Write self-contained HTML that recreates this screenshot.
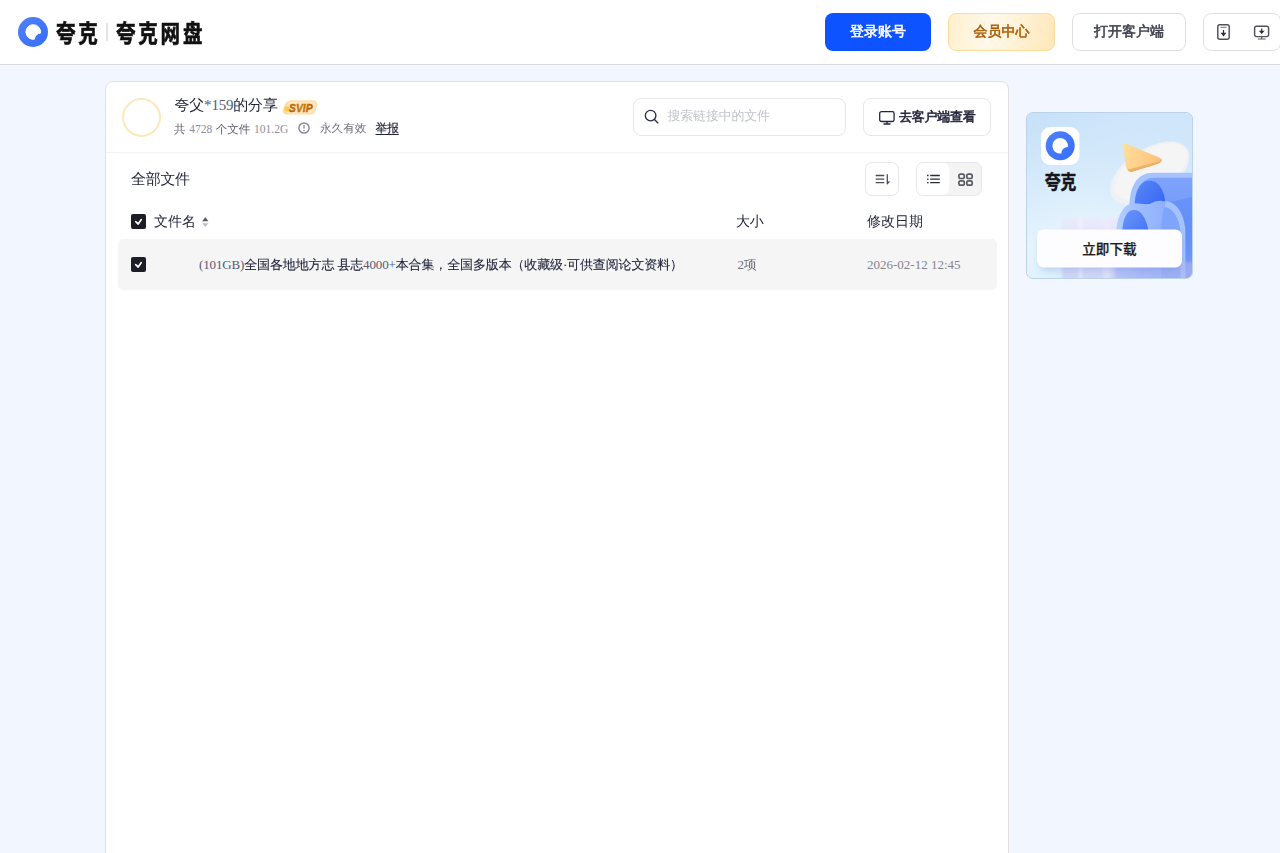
<!DOCTYPE html>
<html lang="zh-CN">
<head>
<meta charset="utf-8">
<title>夸克网盘分享</title>
<style>
*{box-sizing:border-box;margin:0;padding:0}
html,body{width:1280px;height:853px;overflow:hidden}
body{background:#f2f6fe;font-family:"Liberation Serif","WenQuanYi Zen Hei",serif;color:#23263b;position:relative}
.abs{position:absolute;white-space:nowrap}
.hdr{position:absolute;left:0;top:0;width:1280px;height:65px;background:#fff;border-bottom:1px solid #dcdcde}
.logo-t{position:absolute;font-family:"Liberation Sans","Noto Sans CJK SC",sans-serif;font-weight:700;-webkit-text-stroke:0.550px #111;color:#111;white-space:nowrap;transform-origin:0 50%;will-change:transform}
.b{-webkit-text-stroke:0.56px currentColor}
.c{-webkit-text-stroke:0.100px currentColor}
.l{-webkit-text-stroke:0;color:#555a73}
.btn{position:absolute;top:13px;height:38px;border-radius:8px;font-size:14px;text-align:center;line-height:37px;white-space:nowrap}
.card{position:absolute;left:105px;top:81px;width:904px;height:800px;background:#fff;border:1px solid #e1e1e3;border-radius:8px}
.cb{position:absolute;width:15px;height:15px;border-radius:2px;background:#1d1e25}
</style>
</head>
<body>
<div class="hdr">
  <svg class="abs" style="left:17px;top:16px" width="32" height="32" viewBox="0 0 32 32"><defs><linearGradient id="lg" x1="0" y1="0" x2="1" y2="1"><stop offset="0" stop-color="#4f82f7"/><stop offset="1" stop-color="#356cff"/></linearGradient></defs><circle cx="16" cy="16" r="15" fill="url(#lg)"/><path d="M16.300 8.700a7.300 7.300 0 1 0 1.100 14.500a6.300 6.300 0 0 1 6.100-6.100A7.300 7.300 0 0 0 16.300 8.700z" fill="#fff" stroke="#fff" stroke-width="1" stroke-linejoin="round"/></svg>
  <div class="logo-t" style="left:56px;top:16.600px;font-size:19.500px;letter-spacing:2.800px;line-height:32px;transform:scaleY(1.25)">夸克</div>
  <div class="abs" style="left:106px;top:23px;width:1.5px;height:18px;background:#e2e3e8"></div>
  <div class="logo-t" style="left:115.500px;top:16.600px;font-size:19.500px;letter-spacing:2.800px;line-height:32px;transform:scaleY(1.25)">夸克网盘</div>
  <div class="btn b" style="left:825px;width:106px;background:#0d53ff;color:#fff">登录账号</div>
  <div class="btn b" style="left:948px;width:107px;background:linear-gradient(105deg,#ffefcd 0%,#fff9ea 40%,#ffe7b8 100%);border:1px solid #ffdc9a;color:#ad5c04;line-height:35px">会员中心</div>
  <div class="btn b" style="left:1072px;width:114px;background:#fff;border:1px solid #dddfe3;color:#3d414d;line-height:35px">打开客户端</div>
  <div class="btn" style="left:1203px;width:78px;background:#fff;border:1px solid #dddfe3"></div>
  <svg class="abs" style="left:1215px;top:22px" width="18" height="20" viewBox="0 0 18 20" fill="none"><rect x="2.800" y="2.800" width="11.400" height="14.400" rx="2" stroke="#4f525a" stroke-width="1.450"/><path d="M5.500 5.300h6" stroke="#5a5d66" stroke-width="0.900"/><path d="M8.500 8v3" stroke="#2a2c33" stroke-width="1.200"/><path d="M5.600 10.800h5.800l-2.900 3.600z" fill="#2a2c33"/></svg>
  <svg class="abs" style="left:1252px;top:22px" width="20" height="20" viewBox="0 0 20 20" fill="none"><rect x="2.600" y="4.200" width="14" height="10.400" rx="2" stroke="#4f525a" stroke-width="1.450"/><path d="M9.600 14.600v2.200M5.800 17h7.800" stroke="#5a5d66" stroke-width="1.200"/><path d="M9.700 6.500v2.500" stroke="#2a2c33" stroke-width="1.200"/><path d="M6.800 8.700h5.800l-2.900 3.300z" fill="#2a2c33"/></svg>
</div>

<div class="card">
  <div class="abs" style="left:15.500px;top:16px;width:39px;height:39px;border-radius:50%;border:2.400px solid #ffe8b8"></div>
  <div class="abs" style="left:68.500px;top:13.400px;font-size:15px;letter-spacing:-0.200px;line-height:20px">夸父<span class="l">*159</span>的分享</div>
  <!-- SVIP badge -->
  <svg class="abs" style="left:174px;top:15px" width="40" height="20" viewBox="0 0 40 20"><defs><linearGradient id="sv" x1="0" y1="0" x2="1" y2="0"><stop offset="0" stop-color="#ffd891"/><stop offset="0.250" stop-color="#ffe9c2"/><stop offset="1" stop-color="#ffe6b6"/></linearGradient><linearGradient id="svt" x1="0" y1="0" x2="1" y2="0"><stop offset="0" stop-color="#b05600"/><stop offset="0.500" stop-color="#d08414"/><stop offset="1" stop-color="#b45c02"/></linearGradient><filter id="svb" x="-20%" y="-20%" width="140%" height="140%"><feGaussianBlur stdDeviation="0.450"/></filter></defs><path filter="url(#svb)" d="M10 3.800h23.500a3.300 3.300 0 0 1 3.200 4.100l-1.700 6.400a3.800 3.800 0 0 1-3.600 2.700H6.300a3 3 0 0 1-2.900-3.900l1.100-3.500A8 8 0 0 1 10 3.800z" fill="url(#sv)" stroke="#ffd594" stroke-width="0.800"/><circle cx="7" cy="12" r="2.600" fill="#ffc94f" filter="url(#svb)"/><text x="20.800" y="15" text-anchor="middle" font-family="Liberation Sans,sans-serif" font-weight="bold" font-style="italic" font-size="10.300" fill="url(#svt)" stroke="#b86308" stroke-width="0.350">SVIP</text></svg>
  <div class="abs" style="left:68px;top:38.500px;font-size:11.500px;word-spacing:0.800px;line-height:16px;color:#5d606d">共 <span style="color:#8b8fa0">4728</span> 个文件 <span style="color:#8b8fa0">101.2G</span></div>
  <svg class="abs" style="left:191px;top:39px" width="14" height="14" viewBox="0 0 14 14" fill="none"><circle cx="7" cy="7" r="5.100" stroke="#8a8c9c" stroke-width="1.500"/><path d="M7 4v3.600" stroke="#8a8c9c" stroke-width="1.400"/><circle cx="7" cy="9.500" r="0.800" fill="#8a8c9c"/></svg>
  <div class="abs" style="left:214px;top:39px;font-size:11.600px;line-height:16px;color:#6b6e7a">永久有效</div>
  <div class="abs" style="left:269.500px;top:39px;font-size:11.700px;line-height:16px;color:#23263b;text-decoration:underline;text-underline-offset:2px;-webkit-text-stroke:0.200px">举报</div>

  <!-- search -->
  <div class="abs" style="left:527px;top:16px;width:213px;height:38px;border:1px solid #e6e7ea;border-radius:8px"></div>
  <svg class="abs" style="left:537px;top:26.200px" width="18" height="18" viewBox="0 0 18 18" fill="none"><circle cx="7.600" cy="7.600" r="5.300" stroke="#2a2e45" stroke-width="1.350"/><path d="M11.500 11.500l3.400 3.400" stroke="#2a2e45" stroke-width="1.350" stroke-linecap="round"/></svg>
  <div class="abs" style="left:561.500px;top:25px;font-size:13px;letter-spacing:-0.200px;line-height:18px;color:#c3c5cb">搜索链接中的文件</div>
  <!-- client button -->
  <div class="abs" style="left:757px;top:16px;width:128px;height:38px;border:1px solid #e6e7ea;border-radius:8px"></div>
  <svg class="abs" style="left:772px;top:28px" width="18" height="16" viewBox="0 0 18 16" fill="none"><rect x="1.700" y="1.700" width="14.400" height="9.800" rx="1.800" stroke="#23263b" stroke-width="1.300"/><path d="M9 11.500v2.300M5.500 14h7" stroke="#23263b" stroke-width="1.300"/></svg>
  <div class="abs b" style="left:793px;top:26px;font-size:13px;letter-spacing:-0.250px;line-height:18px;color:#23263b">去客户端查看</div>

  <div class="abs" style="left:0;top:70px;width:902px;height:1px;background:#f3f3f5"></div>
  <div class="abs" style="left:25px;top:87px;font-size:15px;letter-spacing:-0.300px;line-height:20px">全部文件</div>

  <!-- sort button -->
  <div class="abs" style="left:759px;top:80px;width:34px;height:34px;border:1px solid #e6e7ea;border-radius:7px"></div>
  <svg class="abs" style="left:767px;top:89px" width="20" height="18" viewBox="0 0 20 18" fill="none"><path d="M2.700 4.500h8.600M2.700 8.100h8.600M2.700 11.700h8.600" stroke="#4a4d57" stroke-width="1.300"/><path d="M14.300 3.200v10" stroke="#4a4d57" stroke-width="1.300"/><path d="M14.300 10.400h3l-3 3z" fill="#4a4d57"/></svg>
  <!-- toggle -->
  <div class="abs" style="left:810px;top:80px;width:66px;height:34px;border:1px solid #e6e7ea;border-radius:7px;background:#f4f4f5"></div>
  <div class="abs" style="left:811px;top:81px;width:32px;height:32px;border-radius:6px;background:#fff"></div>
  <svg class="abs" style="left:818px;top:89px" width="20" height="18" viewBox="0 0 20 18" fill="none"><path d="M3 4.500h1.600M3 8.100h1.600M3 11.700h1.600M6.200 4.500h9.600M6.200 8.100h9.600M6.200 11.700h9.600" stroke="#2a2c33" stroke-width="1.300"/></svg>
  <svg class="abs" style="left:850px;top:89px" width="20" height="18" viewBox="0 0 20 18" fill="none" stroke="#5a5c64" stroke-width="1.700"><rect x="2.900" y="3.100" width="5.400" height="4.400" rx="1.700"/><rect x="10.800" y="3.100" width="5.400" height="4.400" rx="1.700"/><rect x="2.900" y="9.800" width="5.400" height="4.400" rx="1.700"/><rect x="10.800" y="9.800" width="5.400" height="4.400" rx="1.700"/></svg>

  <!-- table header -->
  <div class="cb" style="left:25px;top:132px"></div>
  <svg class="abs" style="left:25px;top:132px" width="15" height="15" viewBox="0 0 15 15" fill="none"><path d="M4.700 7.700L7.200 10L10.300 5.600" stroke="#fff" stroke-width="1.700" stroke-linecap="round" stroke-linejoin="round"/></svg>
  <div class="abs" style="left:48px;top:130px;font-size:14px;line-height:20px">文件名</div>
  <svg class="abs" style="left:95px;top:134px" width="9" height="13" viewBox="0 0 9 13"><path d="M1.200 5.200L4.300 1.200L7.400 5.200z" fill="#55575f"/><path d="M1.200 7.300L4.300 11.100L7.400 7.300z" fill="#bcbec4"/></svg>
  <div class="abs" style="left:630px;top:130px;font-size:14px;letter-spacing:-0.300px;line-height:20px">大小</div>
  <div class="abs" style="left:761px;top:130px;font-size:14px;line-height:20px">修改日期</div>

  <!-- row -->
  <div class="abs" style="left:12px;top:157px;width:879px;height:51px;background:#f5f5f6;border-radius:5px"></div>
  <div class="cb" style="left:25px;top:175px"></div>
  <svg class="abs" style="left:25px;top:175px" width="15" height="15" viewBox="0 0 15 15" fill="none"><path d="M4.700 7.700L7.200 10L10.300 5.600" stroke="#fff" stroke-width="1.700" stroke-linecap="round" stroke-linejoin="round"/></svg>
  <div class="abs c" style="left:93px;top:174px;font-size:13px;letter-spacing:-0.140px;line-height:18px"><span class="l">(101GB)</span>全国各地地方志 县志<span class="l">4000+</span>本合集，全国多版本（收藏级·可供查阅论文资料）</div>
  <div class="abs" style="left:631.500px;top:174px;font-size:13px;letter-spacing:-0.300px;line-height:18px;color:#6e717b">2项</div>
  <div class="abs" style="left:761px;top:174px;font-size:13px;line-height:18px;color:#82848d">2026-02-12 12:45</div>
</div>

<!-- promo -->
<div class="abs" id="promo" style="left:1026px;top:112px;width:166.500px;height:166.500px;border-radius:7px;overflow:hidden;border:1px solid #bcd2e8;background:#d8ecfb">
<svg class="abs" style="left:-1.500px;top:-1px" width="167" height="166" viewBox="0 0 167 166">
<defs>
<linearGradient id="pbg" x1="0" y1="0" x2="0.350" y2="1"><stop offset="0" stop-color="#c3dff8"/><stop offset="0.450" stop-color="#d9ecfb"/><stop offset="0.750" stop-color="#e6f5fd"/><stop offset="1" stop-color="#dcf1fa"/></linearGradient>
<linearGradient id="pbg2" x1="1" y1="0" x2="0.300" y2="0.600"><stop offset="0" stop-color="#cfe5fb"/><stop offset="1" stop-color="#cfe5fb" stop-opacity="0"/></linearGradient>
<linearGradient id="ptri" x1="0" y1="0" x2="1" y2="0.300"><stop offset="0" stop-color="#ffe19c"/><stop offset="1" stop-color="#fbc47e"/></linearGradient>
<linearGradient id="pblk" x1="0" y1="0" x2="1" y2="0"><stop offset="0" stop-color="#a9c6fd"/><stop offset="0.250" stop-color="#86a9fb"/><stop offset="1" stop-color="#6f98fa"/></linearGradient>
<linearGradient id="pblk2" x1="0" y1="0" x2="0" y2="1"><stop offset="0" stop-color="#7ea3fb"/><stop offset="0.550" stop-color="#6d97f9"/><stop offset="1" stop-color="#a9b4ee"/></linearGradient>
<linearGradient id="parch" x1="0" y1="0" x2="1" y2="1"><stop offset="0" stop-color="#5a88f8"/><stop offset="1" stop-color="#2f5ef0"/></linearGradient>
<linearGradient id="parch2" x1="0" y1="0" x2="1" y2="1"><stop offset="0" stop-color="#6a96fa"/><stop offset="1" stop-color="#3f6ff4"/></linearGradient>
<linearGradient id="pfront" x1="0" y1="0" x2="1" y2="0"><stop offset="0" stop-color="#b4cefe"/><stop offset="0.500" stop-color="#9dbcfd"/><stop offset="1" stop-color="#8eb0fc"/></linearGradient>
<linearGradient id="ppur" x1="0" y1="0" x2="0" y2="1"><stop offset="0" stop-color="#ebe6fa"/><stop offset="1" stop-color="#c9c8f2"/></linearGradient>
<linearGradient id="plogo" x1="0" y1="0" x2="1" y2="1"><stop offset="0" stop-color="#4f82f7"/><stop offset="1" stop-color="#356cff"/></linearGradient>
<filter id="pb1" x="-20%" y="-20%" width="140%" height="140%"><feGaussianBlur stdDeviation="0.700"/></filter>
<filter id="pb2" x="-20%" y="-20%" width="140%" height="140%"><feGaussianBlur stdDeviation="1.600"/></filter>
<filter id="pb3" x="-30%" y="-30%" width="160%" height="160%"><feGaussianBlur stdDeviation="4"/></filter>
</defs>
<rect width="168" height="166" fill="url(#pbg)"/>
<rect width="168" height="166" fill="url(#pbg2)"/>
<!-- pale purple block -->
<g filter="url(#pb2)"><rect x="36" y="106" width="68" height="64" fill="url(#ppur)" opacity="0.700"/><rect x="53" y="106" width="3" height="64" fill="#f4f1fd" opacity="0.700"/><rect x="77" y="106" width="7" height="64" fill="#f1eefc" opacity="0.500"/></g>
<!-- white disc -->
<ellipse cx="123.800" cy="61" rx="44.500" ry="24" transform="rotate(-33 123.800 61)" fill="#f0f1f3" filter="url(#pb1)"/>
<ellipse cx="125" cy="59.500" rx="41" ry="21" transform="rotate(-33 125 59.500)" fill="#f5f5f6" filter="url(#pb1)"/>
<!-- triangle -->
<g filter="url(#pb1)">
<path d="M101.500 57.800Q103 60.800 106.500 59.800L132.500 51.800Q136.500 50 135.500 46.800L99.500 52z" fill="#eeb062"/>
<path d="M99.200 31.200Q96.200 30.200 96.700 33.500L100.200 54.500Q101 58 104.500 57L133.200 49.200Q137 47.500 133.200 45.500z" fill="url(#ptri)"/>
</g>
<!-- back block -->
<g filter="url(#pb1)">
<path d="M103.300 95C103.500 73 112 60.800 127 60.800L170 60.800L170 170L103.300 170z" fill="#a6c3fd"/>
<path d="M108.500 95C108.500 76 116 65.800 129 65.800L170 65.800L170 170L108.500 170z" fill="url(#pblk2)"/>
<path d="M108.800 92C109.300 77 116 68.600 123.500 68.600C132 68.600 138.500 77 139.500 93L139.500 106L108.800 106z" fill="url(#parch)"/>
<!-- cloud bump -->
<path d="M139 89C150 90 158 100 159.500 119L159.500 170L130 170L130 100z" fill="#a4c2fd"/>
<path d="M137 94.500C146.500 95.500 153 104 154.500 121L154.500 170L128 170L128 100z" fill="#7fa4fb"/>
<path d="M159.500 119C158.500 104 153 94 145 90L170 84L170 170L159.500 170z" fill="#5a88f8" opacity="0.550"/>
<!-- front arch -->
<path d="M90.300 122C90.600 102 98.500 91.200 108.500 91.200C116 91.200 121 93.500 126 91C131 88.200 136 88.200 140 90.500C136.500 100 135 110 135 122L135 170L90.300 170z" fill="url(#pfront)"/>
<path d="M96 122C96.700 105 101.500 98 107.600 98C115 98 120.500 105 123 122L123 128L96 128z" fill="url(#parch2)"/>
</g>
<!-- bottom purple tint -->
<rect x="88" y="150" width="80" height="18" fill="#b7baf0" opacity="0.550" filter="url(#pb2)"/>
<!-- button shadow + button -->
<rect x="14" y="124" width="140" height="34" rx="6" fill="#5f7fd8" opacity="0.350" filter="url(#pb3)"/>
<rect x="11" y="117.500" width="145" height="38" rx="6.500" fill="#fdfdff"/>
<text x="83.400" y="142" text-anchor="middle" font-family="Liberation Sans,Noto Sans CJK SC,sans-serif" font-weight="500" font-size="13.600" fill="#1c1c22" stroke="#1c1c22" stroke-width="0.250">立即下载</text>
<!-- logo -->
<rect x="15" y="15" width="38.400" height="38" rx="9" fill="#fff"/>
<circle cx="34.200" cy="33.800" r="14.500" fill="url(#plogo)"/>
<path transform="translate(18.200 17.800)" d="M16 8.200a7.800 7.800 0 1 0 1.200 15.500a6.400 6.400 0 0 1 6.500-6.500A7.800 7.800 0 0 0 16 8.200z" fill="#fff"/>
<text transform="translate(34.600 76.600) scale(1 1.200)" x="0" y="0" text-anchor="middle" font-family="Liberation Sans,Noto Sans CJK SC,sans-serif" font-weight="bold" font-size="15.800" fill="#15151a" stroke="#15151a" stroke-width="0.400">夸克</text>
</svg>
</div>
</body>
</html>
